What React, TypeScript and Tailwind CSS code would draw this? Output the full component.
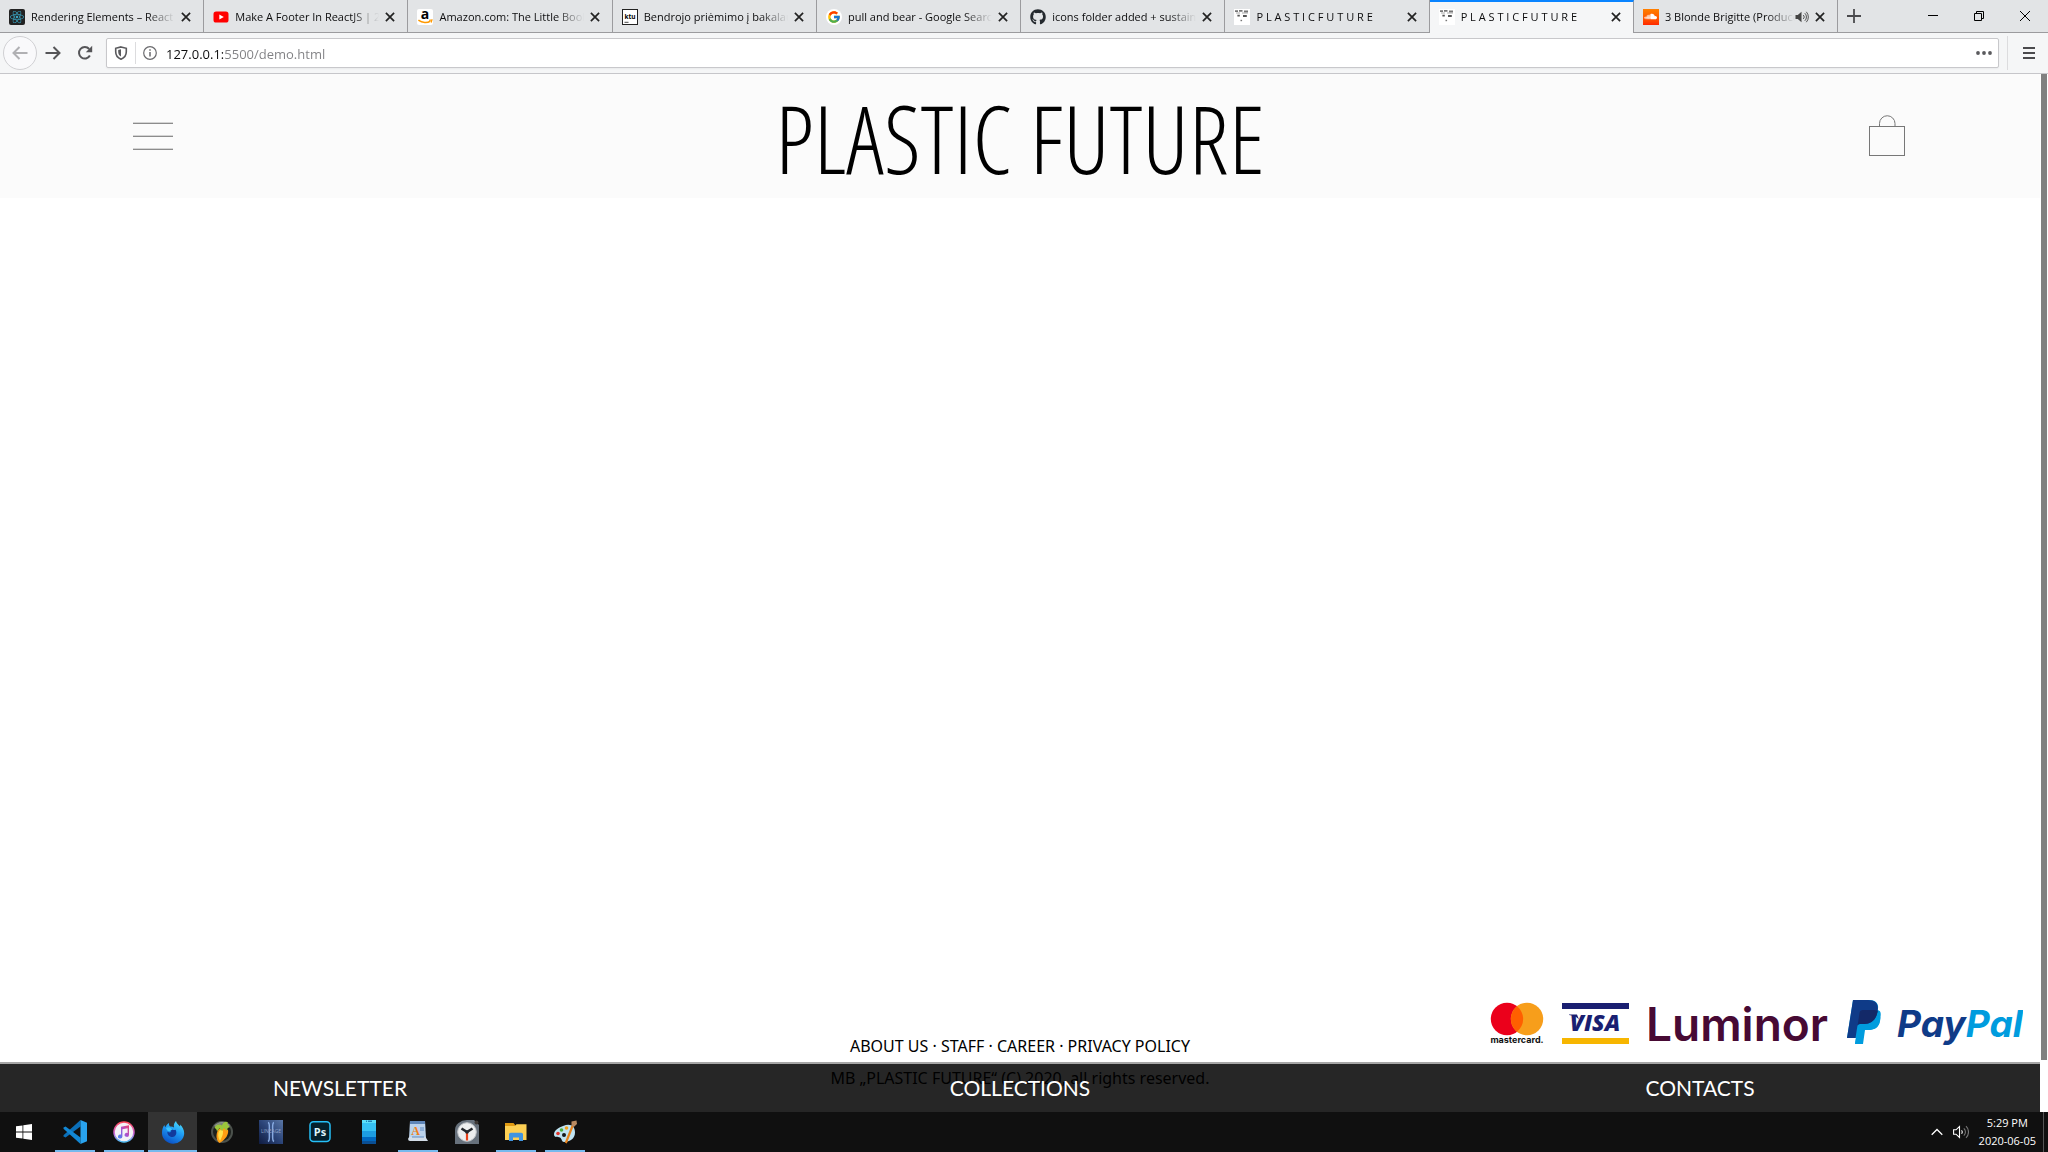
import React from 'react';
import type { ReactNode } from 'react';
import { FaGithub, FaReact, FaSoundcloud } from 'react-icons/fa';
import { FcGoogle } from 'react-icons/fc';

/* ---------- favicons ---------- */

const ReactIcon = () => (
  <span className="flex size-4 items-center justify-center rounded-xs bg-[#222]">
    <FaReact className="size-[14px] text-[#3aa6c4]" />
  </span>
);

const YoutubeIcon = () => (
  <svg viewBox="0 0 16 16" className="size-4">
    <rect x="0.5" y="2.5" width="15" height="11" rx="2.6" fill="#f00" />
    <path d="M6.3 5.4v5.2L10.8 8z" fill="#fff" />
  </svg>
);

const AmazonIcon = () => (
  <svg viewBox="0 0 16 16" className="size-4">
    <rect width="16" height="16" rx="2" fill="#fff" />
    <text x="8" y="10.4" textAnchor="middle" fontFamily="Open Sans, sans-serif" fontWeight="700" fontSize="14">a</text>
    <path d="M1.4 11.2c4 3 9 3 12 .9" fill="none" stroke="#f90" strokeWidth="1.5" />
    <path d="M12 11.2l3-.3-.8 2.7" fill="none" stroke="#f90" strokeWidth="1.1" />
  </svg>
);

const KtuIcon = () => (
  <svg viewBox="0 0 16 16" className="size-4">
    <rect x="0.5" y="0.5" width="15" height="15" fill="#fff" stroke="#222" />
    <text x="8" y="10" textAnchor="middle" fontFamily="Open Sans, sans-serif" fontWeight="700" fontSize="6.5">ktu</text>
    <path d="M2.5 13.3h4" stroke="#333" strokeWidth="0.9" />
  </svg>
);

const GoogleIcon = () => (
  <span className="flex size-4 items-center justify-center rounded-full bg-white">
    <FcGoogle className="size-[14px]" />
  </span>
);

const GithubIcon = () => <FaGithub className="size-4 text-[#24292e]" />;

const PlasticIcon = () => (
  <svg viewBox="0 0 16 16" className="size-4">
    <rect width="16" height="16" fill="#fff" />
    <path d="M1 2.2h3M5 1.8h3.5M10 2.5h4" stroke="#777" strokeWidth="1.8" />
    <path d="M2 4h4M8 4h6" stroke="#aaa" strokeWidth="1" />
    <path d="M3.4 6.7h2.4M9 7h3.8" stroke="#555" strokeWidth="1.8" />
    <path d="M6.5 11.5h1.600" stroke="#777" strokeWidth="1.400" />
  </svg>
);

const SoundcloudIcon = () => (
  <span className="flex size-4 items-center justify-center bg-linear-to-b from-[#ff8000] to-[#ff2600]">
    <FaSoundcloud className="size-[13px] text-white" />
  </span>
);

const CloseGlyph = () => (
  <svg viewBox="0 0 10 10" className="size-[10px]">
    <path d="M0.9 0.9l8.2 8.2M9.1 0.9L0.9 9.1" stroke="#222" strokeWidth="1.7" fill="none" />
  </svg>
);

const SoundGlyph = () => (
  <svg viewBox="0 0 14 12" className="h-3 w-[14px] shrink-0">
    <path d="M0.5 4h2.3L6.5 0.8v10.4L2.8 8H0.5z" fill="#444" />
    <path d="M8.3 4a2.8 2.8 0 0 1 0 4M9.8 2.2a5.2 5.2 0 0 1 0 7.6M11.3 0.8a7.6 7.6 0 0 1 0 10.4" fill="none" stroke="#555" strokeWidth="1" />
  </svg>
);

/* ---------- browser tabs ---------- */

type Tab = { title: string; icon: ReactNode; active?: boolean; audio?: boolean };

const tabs: Tab[] = [
  { title: 'Rendering Elements – React', icon: <ReactIcon /> },
  { title: 'Make A Footer In ReactJS | 2020', icon: <YoutubeIcon /> },
  { title: 'Amazon.com: The Little Book', icon: <AmazonIcon /> },
  { title: 'Bendrojo priėmimo į bakalauro', icon: <KtuIcon /> },
  { title: 'pull and bear - Google Search', icon: <GoogleIcon /> },
  { title: 'icons folder added + sustainability', icon: <GithubIcon /> },
  { title: 'P L A S T I C F U T U R E', icon: <PlasticIcon /> },
  { title: 'P L A S T I C F U T U R E', icon: <PlasticIcon />, active: true },
  { title: '3 Blonde Brigitte (Produced', icon: <SoundcloudIcon />, audio: true },
];

const tabBase = 'flex h-full min-w-0 flex-1 items-center border-r border-[#9b9b9e] pr-3 pl-[9px]';

function TabItem({ tab }: { tab: Tab }) {
  return (
    <div
      className={
        tab.active
          ? tabBase + ' border-t-2 border-t-[#0a84ff] bg-[#f5f6f7] pb-[2px]'
          : tabBase + ' border-b border-b-[#9b9b9e] bg-[#e2e4e6] pt-px'
      }
    >
      <button type="button" className="flex min-w-0 flex-1 items-center gap-[6px]">
        <span className="shrink-0">{tab.icon}</span>
        <span className="min-w-0 flex-1 overflow-hidden mask-r-from-[calc(100%-28px)] text-left text-[11px] leading-5 whitespace-nowrap text-[#0c0c0d]">
          {tab.title}
        </span>
      </button>
      {tab.audio && <button type="button" aria-label="Mute tab"><SoundGlyph /></button>}
      <button type="button" aria-label="Close tab" className="pl-[6px]">
        <CloseGlyph />
      </button>
    </div>
  );
}

function TabStrip() {
  return (
    <div className="flex h-[33px] bg-[#e2e4e6]">
      <div className="flex w-[89.75%]">
        {tabs.map((tab, i) => (
          <TabItem key={i} tab={tab} />
        ))}
      </div>
      <div className="flex flex-1 items-center justify-between border-b border-[#9b9b9e] pr-[18px] pl-[9px]">
        <button type="button" aria-label="New tab">
          <svg viewBox="0 0 14 14" className="size-[14px]"><path d="M7 0v14M0 7h14" stroke="#4a4a4d" strokeWidth="1.8" /></svg>
        </button>
        <div className="flex items-center gap-9">
          <button type="button" aria-label="Minimize">
            <svg viewBox="0 0 10 10" className="size-[10px]"><path d="M0 4.5h10" stroke="#000" /></svg>
          </button>
          <button type="button" aria-label="Restore">
            <svg viewBox="0 0 10 10" className="size-[10px]"><path d="M0.5 2.5h7v7h-7zM2.5 2.5v-2h7v7h-2" fill="none" stroke="#000" /></svg>
          </button>
          <button type="button" aria-label="Close window">
            <svg viewBox="0 0 10 10" className="size-[10px]"><path d="M0 0l10 10M10 0L0 10" stroke="#000" /></svg>
          </button>
        </div>
      </div>
    </div>
  );
}

function Toolbar() {
  return (
    <div className="flex h-[41px] items-center border-b border-[#c6c6ca] bg-[#f5f6f7] pr-[13px] pl-[3px]">
      <button type="button" aria-label="Back" className="flex size-[34px] items-center justify-center rounded-full border border-[#d0d0d3] bg-[#f9f9fb]">
        <svg viewBox="0 0 16 14" className="h-[14px] w-4"><path d="M15.5 7H1.5M7.5 1L1.5 7l6 6" fill="none" stroke="#b0b0b3" strokeWidth="2" /></svg>
      </button>
      <button type="button" aria-label="Forward" className="ml-2">
        <svg viewBox="0 0 16 14" className="h-[14px] w-4"><path d="M0.5 7h14M8.5 1l6 6-6 6" fill="none" stroke="#555558" strokeWidth="2" /></svg>
      </button>
      <button type="button" aria-label="Reload" className="ml-4">
        <svg viewBox="0 0 16 16" className="size-4">
          <path d="M12.9 10.6A5.8 5.8 0 1 1 12.2 4" fill="none" stroke="#555558" strokeWidth="2" />
          <path d="M15.2 0.8v6.4H8.8z" fill="#555558" />
        </svg>
      </button>
      <div className="ml-[13px] flex h-[30px] flex-1 items-center rounded-xs border border-[#c8c8cb] bg-white pr-[6px] pl-[7px] shadow-xs">
        <button type="button" aria-label="Tracking protection">
          <svg viewBox="0 0 14 14" className="size-[14px]">
            <path d="M7 0.9l5.3 1.4v3.4c0 3.6-2 6.2-5.3 7.5-3.3-1.3-5.3-3.9-5.3-7.5V2.3z" fill="none" stroke="#5a5a5d" strokeWidth="1.6" />
            <path d="M7 3.3v7.3C5.2 9.6 4.2 7.9 4.2 5.7V4z" fill="#5a5a5d" />
          </svg>
        </button>
        <span className="ml-[7px] h-[22px] w-px bg-[#dcdcde]" />
        <button type="button" aria-label="Site information" className="ml-[7px]">
          <svg viewBox="0 0 14 14" className="size-[14px]">
            <circle cx="7" cy="7" r="6.3" fill="none" stroke="#6a6a6d" strokeWidth="1.2" />
            <path d="M7 6v4.5M7 3.3v1.5" stroke="#6a6a6d" strokeWidth="1.5" />
          </svg>
        </button>
        <input
          aria-label="Address"
          defaultValue="127.0.0.1:5500/demo.html"
          className="ml-[9px] min-w-0 flex-1 bg-linear-to-r from-[#0c0c0d] from-[57px] to-[#808083] to-[57px] bg-clip-text pt-px text-[13px] leading-5 text-transparent outline-none"
        />
        <button type="button" aria-label="Page actions">
          <svg viewBox="0 0 16 4" className="h-1 w-4"><g fill="#5a5a5d"><circle cx="2" cy="2" r="1.9" /><circle cx="8" cy="2" r="1.9" /><circle cx="14" cy="2" r="1.9" /></g></svg>
        </button>
      </div>
      <span className="ml-2 h-[34px] w-px bg-[#dcdcde]" />
      <button type="button" aria-label="Open menu" className="ml-[15px]">
        <svg viewBox="0 0 12 12" className="size-3"><path d="M0 1h12M0 6h12M0 11h12" stroke="#4a4a4d" strokeWidth="2" /></svg>
      </button>
    </div>
  );
}

/* ---------- shop page ---------- */

function ShopHeader() {
  return (
    <header className="grid h-[124px] grid-cols-[1fr_auto_1fr] items-center bg-[#fbfbfb] px-[132px]">
      <button type="button" aria-label="Menu" className="justify-self-start pb-[2px]">
        <svg viewBox="0 0 42 30" className="h-[30px] w-[42px]">
          <path d="M1 2.5h40M1 15.5h40M1 28.5h40" stroke="#d4d4d4" />
          <path d="M1 3.5h40M1 16.5h40M1 29.5h40" stroke="#8c8c8c" />
        </svg>
      </button>
      <h1 className="pt-1 font-['Open_Sans_Condensed_Light','Open_Sans',sans-serif] text-[94px] leading-[120px] font-light text-black">PLASTIC FUTURE</h1>
      <button type="button" aria-label="Shopping bag" className="justify-self-end pb-[2px]">
        <svg viewBox="0 0 40 44" className="h-11 w-10">
          <g fill="none" stroke="#777">
            <rect x="1.5" y="13.5" width="35" height="29" />
            <path d="M11.5 13.5v-3a7.500 7.500 0 0 1 15.500 0v3" />
          </g>
        </svg>
      </button>
    </header>
  );
}

const Mastercard = () => (
  <svg viewBox="0 0 54 46" className="h-[46px] w-[54px]" role="img" aria-label="mastercard">
    <circle cx="17" cy="20" r="16.2" fill="#eb001b" />
    <circle cx="37" cy="20" r="16.2" fill="#f79e1b" />
    <path d="M27 7.300a16.200 16.200 0 0 1 0 25.400a16.200 16.200 0 0 1 0-25.400z" fill="#ff5f00" />
    <text x="27" y="44" textAnchor="middle" fontFamily="Inter, sans-serif" fontWeight="700" fontSize="9" fill="#111">mastercard.</text>
  </svg>
);

const Visa = () => (
  <svg viewBox="0 0 67 46" className="h-[46px] w-[67px]" role="img" aria-label="VISA">
    <rect y="4" width="67" height="6" fill="#1a1f71" />
    <rect y="39" width="67" height="6" fill="#f7b600" />
    <text x="33" y="32" textAnchor="middle" fontFamily="Open Sans, sans-serif" fontStyle="italic" fontWeight="800" fontSize="23" fill="#1a1f71">VISA</text>
    <path d="M7 15.500h8l2 5c-2-2.500-5-4-10-4.500z" fill="#1a1f71" />
  </svg>
);

const Luminor = () => (
  <svg viewBox="0 0 182 46" className="h-[46px] w-[182px]" role="img" aria-label="Luminor">
    <text x="-3" y="42" fontFamily="Inter, sans-serif" fontWeight="600" fontSize="46" fill="#470a34">Luminor</text>
  </svg>
);

const PayPal = () => (
  <svg viewBox="0 0 176 46" className="h-[46px] w-[176px]" role="img" aria-label="PayPal">
    <path d="M13 11h16c6 0 5 4 4 10-1 7-6 10-13 10h-4l-2 14H8z" fill="#009cde" />
    <path d="M6 1h16c8 0 11 5 8 12 2.500 2 4 5 3 9-1 7-6 9-12 9h-3l-2 14H8l1-6H0z" fill="#009cde" />
    <path d="M6 1h15c8 0 11 4 9.500 12C29 21 24 25 17 25h-4c-1.500 0-2.500 1-2.700 2.500L8.500 39H0z" fill="#0f3b88" />
    <path d="M12.500 14c.3-2 1.500-3 3.500-3h10c2 0 3.500.3 4.700.8 0 .4-.1.800-.2 1.200C29 21 24 25 17 25h-4c-1 0-1.800.4-2.300 1.200z" fill="#132968" />
    <text x="50" y="38" fontFamily="Inter, sans-serif" fontStyle="italic" fontWeight="700" fontSize="37">
      <tspan fill="#0f3b88">Pay</tspan><tspan fill="#009cde">Pal</tspan>
    </text>
  </svg>
);

const footerLinks = ['ABOUT US', 'STAFF', 'CAREER', 'PRIVACY POLICY'];

function ShopFooter() {
  return (
    <footer className="mt-auto grid grid-cols-3 pb-[18px] font-['Noto_Sans',sans-serif] text-base leading-8 text-black">
      <div />
      <div className="flex flex-col justify-end text-center">
        <nav>
          {footerLinks.map((label, i) => (
            <React.Fragment key={label}>
              {i > 0 && ' · '}
              <a href="#">{label}</a>
            </React.Fragment>
          ))}
        </nav>
        <p>MB „PLASTIC FUTURE“ (C) 2020, all rights reserved.</p>
      </div>
      <div className="flex items-start justify-end pr-[17px] pb-[49px]">
        <Mastercard />
        <span className="w-[18px]" />
        <Visa />
        <span className="w-5" />
        <Luminor />
        <span className="w-4" />
        <PayPal />
      </div>
    </footer>
  );
}

function BottomBar() {
  return (
    <nav className="absolute inset-x-0 bottom-0 grid h-[50px] grid-cols-3 items-center border-t-2 border-[#a6a6a6] bg-black/85 text-center font-[Lato,sans-serif] text-[21px] leading-7 text-white">
      <a href="#">NEWSLETTER</a>
      <a href="#">COLLECTIONS</a>
      <a href="#">CONTACTS</a>
    </nav>
  );
}

/* ---------- taskbar ---------- */

const VsCode = () => (
  <svg viewBox="0 0 24 24" className="size-6">
    <path d="M17.500 0v6.500L2.600 17.600.5 16.500v-1.300z" fill="#0b6fb8" />
    <path d="M17.500 24v-6.500L2.600 6.400.5 7.500v1.300z" fill="#1287d4" />
    <path d="M17.500 0L24 2.800v18.400L17.500 24z" fill="#29a3ee" />
  </svg>
);

const ITunes = () => (
  <svg viewBox="0 0 24 24" className="size-6">
    <defs>
      <linearGradient id="itRing" x1="0" y1="0" x2="0" y2="1"><stop offset="0" stopColor="#ff4b5c" /><stop offset="0.6" stopColor="#c567dd" /><stop offset="1" stopColor="#4fc3f7" /></linearGradient>
      <linearGradient id="itNote" x1="1" y1="0" x2="0" y2="1"><stop offset="0" stopColor="#f0436b" /><stop offset="0.5" stopColor="#a552d6" /><stop offset="1" stopColor="#3a8bf5" /></linearGradient>
    </defs>
    <circle cx="12" cy="12" r="10" fill="#f3f1f7" stroke="url(#itRing)" strokeWidth="1.5" />
    <path d="M9 6.800l8-1.600v9.700a2.200 2 0 1 1-1.400-1.900V8.300l-5.200 1v7.200a2.200 2 0 1 1-1.400-1.900z" fill="url(#itNote)" />
  </svg>
);

const Firefox = () => (
  <svg viewBox="0 0 24 24" className="size-6">
    <defs>
      <linearGradient id="ffBody" x1="0.8" y1="0" x2="0.3" y2="1"><stop offset="0" stopColor="#52e0fa" /><stop offset="0.45" stopColor="#1e9bf5" /><stop offset="1" stopColor="#0a4fc4" /></linearGradient>
    </defs>
    <path d="M15 1c.5 2.500 2.500 3.500 4 5.500.3-.8.200-1.500 0-2 2.500 2.300 4.200 5.300 4.200 8.700A11 10.500 0 0 1 1 13c0-3.500.8-6 2.500-8 0 1 .3 1.800.8 2.300.8-2 2.200-3.500 3.700-4.300-.3 1.500.2 2.700 1 3.500 1.500-.2 3 .2 4 1C12.300 4.800 13.500 2.500 15 1z" fill="url(#ffBody)" />
    <path d="M7 9.500c1.200-1.300 3-1.200 4.300.2 1.400.3 2.200.3 3.200 0 1.800 2.800.7 7-3 7.300-3 .2-5.500-2.500-5.100-5.300l2 .8 2-.7z" fill="#123a9c" />
    <path d="M5 8c2-1.500 4.500-1 6.200 1.500l-2 1.500c-1.500.5-3 .3-4.200-3z" fill="#3bc4fb" />
  </svg>
);

const FlStudio = () => (
  <svg viewBox="0 0 24 24" className="size-6">
    <circle cx="12" cy="12" r="11" fill="#4b514c" />
    <circle cx="12" cy="12" r="9" fill="#1d211d" />
    <path d="M4 6A11 11 0 0 1 20 5l-3 3H7z" fill="#b8beb5" opacity="0.6" />
    <path d="M8 10c2-3 7-3 10 0 1 4-2.500 10-8.500 13C5.500 20 6 14 8 10z" fill="#ff9d12" />
    <path d="M9 11c1.500-1.500 3-1.500 4 0 .5 3-1.500 7-3 10-2-3-2.300-7-1-10z" fill="#ffe14a" />
    <path d="M4.500 8C6 4 10 4 12 5.500 13 2 16 1 18 2.500 16.500 4 18 5 20 7c-2 .8-3 1.500-3.500 4L14 8l-2 3-2.500-3L7 11.500C6.800 9.500 6 8.500 4.500 8z" fill="#9ac63b" />
  </svg>
);

const Lineage = () => (
  <svg viewBox="0 0 24 24" className="size-6">
    <defs><linearGradient id="lnBg" x1="0" y1="1" x2="1" y2="0"><stop offset="0" stopColor="#101c40" /><stop offset="0.5" stopColor="#2b4478" /><stop offset="1" stopColor="#5a77a6" /></linearGradient></defs>
    <rect width="24" height="24" fill="url(#lnBg)" />
    <path d="M9 2.500c2 .5 1.300 3 1.300 9.500S11 20.500 9 21.500M15 2.500c-2 .5-1.300 3-1.300 9.500s-.7 8.500 1.300 9.500" fill="none" stroke="#86a9e0" strokeWidth="1.5" />
    <text x="12" y="13" textAnchor="middle" fontFamily="Open Sans, sans-serif" fontSize="5" fill="#8fa3c8">LINEAGE</text>
  </svg>
);

const Photoshop = () => (
  <svg viewBox="0 0 24 24" className="size-6">
    <rect x="2" y="1.800" width="20" height="19.600" rx="3.500" fill="#05202c" stroke="#26c0f8" strokeWidth="1.5" />
    <text x="12" y="16" textAnchor="middle" fontFamily="Open Sans, sans-serif" fontWeight="700" fontSize="11" fill="#dff4fc">Ps</text>
  </svg>
);

const Phone = () => (
  <svg viewBox="0 0 24 24" className="size-6">
    <rect x="5" y="0" width="14" height="3" fill="#5be0fa" />
    <rect x="5" y="3" width="14" height="8" fill="#36c2f4" />
    <rect x="5" y="11" width="14" height="6" fill="#1c9de2" />
    <rect x="5" y="17" width="14" height="4" fill="#0068c0" />
    <rect x="5" y="21" width="14" height="3" fill="#0a4f94" />
    <path d="M9 1.200h1M11 1.200h4" stroke="#07559c" />
  </svg>
);

const WordPad = () => (
  <svg viewBox="0 0 24 24" className="size-6">
    <path d="M4 1h15l1 17H3z" fill="#bcd3ec" />
    <path d="M4 1h15v3H4z" fill="#5f86b8" />
    <path d="M4 17h15.500l2.500 4H4c-2.500 0-2.500-4 0-4z" fill="#d3dde8" />
    <path d="M14 8h4M14 10h4M6 17h12" stroke="#5f8cc4" />
    <text x="9.500" y="15" textAnchor="middle" fontFamily="Liberation Serif, serif" fontWeight="700" fontSize="12" fill="#ef7f1a">A</text>
  </svg>
);

const Clock = () => (
  <svg viewBox="0 0 24 24" className="size-6">
    <path d="M0 10A12 10 0 0 1 12 0h7l5 5v19H0z" fill="#67717c" />
    <circle cx="21.500" cy="2.500" r="2" fill="#3d3835" />
    <circle cx="12" cy="12" r="9.300" fill="#eceeef" stroke="#c2c6ca" />
    <path d="M12 12L6.500 8.500M12 12l5.500-3.500" stroke="#22262b" strokeWidth="2.600" />
    <path d="M12 13v7.500" stroke="#e8401a" strokeWidth="2.200" />
    <circle cx="12" cy="12" r="1.800" fill="#22262b" />
  </svg>
);

const Folder = () => (
  <svg viewBox="0 0 24 24" className="size-6">
    <path d="M1 3h8.500L12 6v3H1z" fill="#e09a12" />
    <path d="M1 6h10l1.500-1.700h10V20H1z" fill="#fccf53" />
    <path d="M5 21v-6.500c0-1 .7-1.700 1.700-1.700h10.600c1 0 1.700.7 1.700 1.700V21h-4v-3.500H9V21z" fill="#4094df" />
  </svg>
);

const Paint = () => (
  <svg viewBox="0 0 24 24" className="size-6">
    <path d="M10 6c7-3 12-.5 12 6.500 0 6-5 9.500-11 9.500-2.500 0-2-3.500-4-4.500S1 18 1 14.500C1 10.500 5 8 10 6z" fill="#bfe3f2" />
    <circle cx="5" cy="13.500" r="1.800" fill="#e0352b" />
    <circle cx="8.500" cy="10" r="1.800" fill="#4cae3b" />
    <circle cx="13.500" cy="8" r="1.800" fill="#f2a21f" />
    <circle cx="11" cy="15" r="2" fill="#15181a" />
    <path d="M19.500 6L12.800 23" fill="none" stroke="#e8831c" strokeWidth="2.200" />
    <path d="M18.500 1.500L23.500.5 24 4l-3.200 3-2.300-1.500z" fill="#b98a60" />
  </svg>
);

type AppEntry = { name: string; icon: ReactNode; state?: 'open' | 'active' };

const apps: AppEntry[] = [
  { name: 'Visual Studio Code', icon: <VsCode />, state: 'open' },
  { name: 'iTunes', icon: <ITunes />, state: 'open' },
  { name: 'Firefox', icon: <Firefox />, state: 'active' },
  { name: 'FL Studio', icon: <FlStudio /> },
  { name: 'Lineage', icon: <Lineage /> },
  { name: 'Photoshop', icon: <Photoshop /> },
  { name: 'Your Phone', icon: <Phone /> },
  { name: 'WordPad', icon: <WordPad />, state: 'open' },
  { name: 'Clock', icon: <Clock /> },
  { name: 'File Explorer', icon: <Folder />, state: 'open' },
  { name: 'Paint', icon: <Paint />, state: 'open' },
];

function TaskbarApp({ app }: { app: AppEntry }) {
  const active = app.state === 'active';
  return (
    <button
      type="button"
      aria-label={app.name}
      className={active ? 'flex w-[49px] flex-col items-center bg-[#333] pt-2' : 'flex w-[49px] flex-col items-center pt-2'}
    >
      {app.icon}
      {app.state && <span className={active ? 'mt-auto h-[2px] w-full bg-[#76b9ed]' : 'mt-auto h-[2px] w-10 bg-[#76b9ed]'} />}
    </button>
  );
}

function Taskbar() {
  return (
    <div className="flex h-10 bg-[#101010] text-white">
      <button type="button" aria-label="Start" className="mr-[2px] flex w-12 items-center justify-center">
        <svg viewBox="0 0 16 16" className="size-4">
          <path d="M0 2.300l6.500-.9v6.200H0zM7.300 1.200L16 0v7.600H7.300zM0 8.400h6.500v6.200L0 13.700zM7.300 8.400H16V16l-8.700-1.200z" fill="#fff" />
        </svg>
      </button>
      {apps.map((app) => (
        <TaskbarApp key={app.name} app={app} />
      ))}
      <div className="ml-auto flex items-center">
        <button type="button" aria-label="Show hidden icons">
          <svg viewBox="0 0 12 8" className="h-2 w-3"><path d="M0.700 6.800L6 1.500l5.300 5.300" fill="none" stroke="#fff" strokeWidth="1.300" /></svg>
        </button>
        <button type="button" aria-label="Volume" className="ml-[10px]">
          <svg viewBox="0 0 16 14" className="h-[14px] w-4">
            <path d="M0.600 4.800h2.400L6.500 1.500v11L3 9.200H0.600z" fill="none" stroke="#fff" strokeWidth="1.100" />
            <path d="M8.500 5.300a2.300 2.300 0 0 1 0 3.400" fill="none" stroke="#fff" strokeWidth="1.100" />
            <path d="M10.800 3.300a5 5 0 0 1 0 7.400M13 1.200a8 8 0 0 1 0 11.600" fill="none" stroke="#777" strokeWidth="1.100" />
          </svg>
        </button>
        <button type="button" className="ml-[10px] text-center text-[11px] leading-[18px]">
          <span className="block">5:29 PM</span>
          <span className="block">2020-06-05</span>
        </button>
        <span className="mr-1 ml-[7px] h-10 w-px bg-[#555]" />
      </div>
    </div>
  );
}

export default function App() {
  return (
    <div className="flex h-screen flex-col overflow-hidden bg-white font-['Open_Sans','Noto_Sans',sans-serif]">
      <TabStrip />
      <Toolbar />
      <div className="flex min-h-0 flex-1">
        <main className="relative flex min-w-0 flex-1 flex-col">
          <ShopHeader />
          <ShopFooter />
          <BottomBar />
        </main>
        <div className="w-2 bg-white pr-px pl-px">
          <div className="h-[95%] bg-[#808080]" />
        </div>
      </div>
      <Taskbar />
    </div>
  );
}
